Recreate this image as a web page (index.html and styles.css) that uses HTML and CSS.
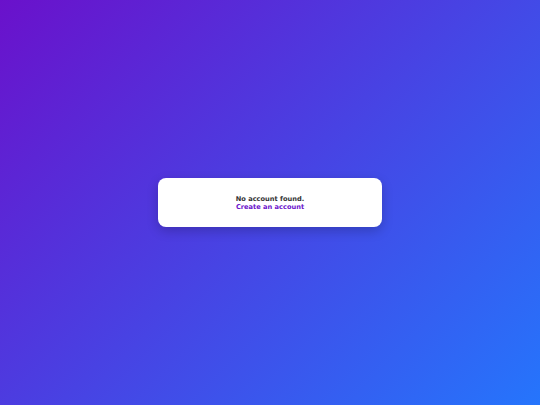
FILE: index.html
```html
<!DOCTYPE html>
<html>
<head>
<meta charset="utf-8">
<link rel="stylesheet" href="styles.css">
</head>
<body>
<main class="page">
  <div class="card">
    <p class="message">No account found.</p>
    <a class="link" href="#">Create an account</a>
  </div>
</main>
</body>
</html>
```
FILE: styles.css
```css
html, body {
  margin: 0;
  padding: 0;
  height: 100%;
}
body {
  font-family: "DejaVu Sans", sans-serif;
  background: linear-gradient(135deg, #6a11cb 0%, #2575fc 100%);
}
.page {
  height: 100%;
  display: flex;
  align-items: center;
  justify-content: center;
}
.card {
  width: 224px;
  height: 49px;
  box-sizing: border-box;
  padding: 0 16px;
  background: #fff;
  border-radius: 8px;
  box-shadow: 0 4px 12px rgba(0, 0, 0, 0.2);
  display: flex;
  flex-direction: column;
  align-items: center;
  justify-content: center;
  font-size: 6.65px;
  font-weight: bold;
  line-height: 8px;
}
.message {
  margin: 0;
  color: #333;
}
.link {
  color: #6a11cb;
  text-decoration: none;
}
```
